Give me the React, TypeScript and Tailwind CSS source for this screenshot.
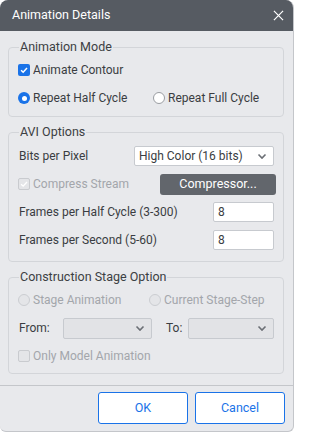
import React from 'react';

const ChevronDown = ({ className = '' }: { className?: string }) => (
  <svg viewBox="0 0 12 12" className={className} fill="none" stroke="currentColor" strokeWidth="1.6">
    <path d="M2.5 4.5 6 8l3.5-3.5" />
  </svg>
);

const CheckBox = ({ checked, disabled }: { checked?: boolean; disabled?: boolean }) => {
  if (checked && !disabled) {
    return (
      <span className="flex h-[12px] w-[12px] items-center justify-center rounded-[2px] bg-[#1a73e8]">
        <svg viewBox="0 0 12 12" className="h-[10px] w-[10px]" fill="none" stroke="white" strokeWidth="1.8">
          <path d="M2.5 6.2 5 8.6 9.6 3.6" />
        </svg>
      </span>
    );
  }
  return (
    <span className="flex h-[12px] w-[12px] items-center justify-center rounded-[2px] border border-[#c9cbcf] bg-[#e4e5e8]">
      {checked && (
        <svg viewBox="0 0 12 12" className="h-[10px] w-[10px]" fill="none" stroke="white" strokeWidth="1.6">
          <path d="M2.5 6.2 5 8.6 9.6 3.6" />
        </svg>
      )}
    </span>
  );
};

const Radio = ({ checked, disabled }: { checked?: boolean; disabled?: boolean }) => {
  if (checked) {
    return (
      <span className="flex h-[12px] w-[12px] items-center justify-center rounded-full bg-[#1a73e8]">
        <span className="h-[5px] w-[5px] rounded-full bg-white" />
      </span>
    );
  }
  return (
    <span
      className={
        disabled
          ? 'h-[12px] w-[12px] rounded-full border border-[#cbcdd1] bg-[#e4e5e8]'
          : 'h-[12px] w-[12px] rounded-full border border-[#9a9da2] bg-white'
      }
    />
  );
};

const Group = ({ title, className = '', children }: { title: string; className?: string; children: React.ReactNode }) => (
  <fieldset className={`rounded-[4px] border border-[#d3d5d9] px-[9px] ${className}`}>
    <legend className="ml-[1px] px-[1px] text-[12.5px] leading-[16px] text-[#3c4043]">{title}</legend>
    {children}
  </fieldset>
);

export default function App() {
  return (
    <div
      className="flex h-[432px] w-[294px] flex-col overflow-hidden rounded-t-[8px] rounded-b-[6px] border-r border-b border-[#c4c6ca] bg-[#e8e9ec] text-[12px] text-[#3a3d42]"
      style={{ fontFamily: 'Roboto, "Noto Sans", sans-serif' }}
    >
      {/* Title bar */}
      <div className="flex h-[31px] shrink-0 items-center justify-between bg-[#565b62] pl-[12px] pr-[9px]">
        <span className="text-[12.5px] text-white">Animation Details</span>
        <svg viewBox="0 0 12 12" className="h-[11px] w-[11px]" fill="none" stroke="white" strokeWidth="1.3">
          <path d="M1 1l10 10M11 1 1 11" />
        </svg>
      </div>

      <div className="flex flex-col gap-[7px] px-[8px] pt-[8px] pr-[9px]">
        {/* Animation Mode */}
        <Group title="Animation Mode" className="pt-px pb-[4px]">
          <div className="flex h-[28px] items-center gap-[3px]">
            <CheckBox checked />
            <span>Animate Contour</span>
          </div>
          <div className="flex h-[28px] items-center">
            <div className="flex w-[135px] items-center gap-[3px]">
              <Radio checked />
              <span>Repeat Half Cycle</span>
            </div>
            <div className="flex items-center gap-[3px]">
              <Radio />
              <span>Repeat Full Cycle</span>
            </div>
          </div>
        </Group>

        {/* AVI Options */}
        <Group title="AVI Options" className="pt-[2px] pb-[7px]">
          <div className="flex h-[28px] items-center justify-between">
            <span className="pl-px">Bits per Pixel</span>
            <div className="flex h-[20px] w-[140px] items-center justify-between rounded-[2px] border border-[#c7cacf] bg-white pr-[5px] pl-[4px]">
              <span>High Color (16 bits)</span>
              <ChevronDown className="h-[12px] w-[12px] text-[#6b6f75]" />
            </div>
          </div>
          <div className="flex h-[28px] items-center justify-between">
            <div className="flex items-center gap-[3px] text-[#a3a6ab]">
              <CheckBox checked disabled />
              <span>Compress Stream</span>
            </div>
            <button className="-mr-[2px] h-[21px] w-[116px] rounded-[3px] bg-[#62666c] text-[12.5px] text-white">
              Compressor...
            </button>
          </div>
          <div className="flex h-[28px] items-center justify-between">
            <span className="pl-px">Frames per Half Cycle (3-300)</span>
            <div className="flex h-[20px] w-[61px] items-center rounded-[2px] border border-[#c7cacf] bg-white pl-[4px]">
              8
            </div>
          </div>
          <div className="flex h-[28px] items-center justify-between">
            <span className="pl-px">Frames per Second (5-60)</span>
            <div className="flex h-[20px] w-[61px] items-center rounded-[2px] border border-[#c7cacf] bg-white pl-[4px]">
              8
            </div>
          </div>
        </Group>

        {/* Construction Stage Option */}
        <Group title="Construction Stage Option" className="pt-px pb-[3px]">
          <div className="flex h-[28px] items-center text-[#a3a6ab]">
            <div className="flex w-[131px] items-center gap-[3px]">
              <Radio disabled />
              <span>Stage Animation</span>
            </div>
            <div className="flex items-center gap-[3px] whitespace-nowrap">
              <Radio disabled />
              <span>Current Stage-Step</span>
            </div>
          </div>
          <div className="flex h-[28px] items-center">
            <span className="w-[45px] pl-px">From:</span>
            <div className="flex h-[21px] w-[89px] items-center justify-end rounded-[2px] border border-[#c7cacf] bg-[#e2e3e6] pr-[5px]">
              <ChevronDown className="h-[12px] w-[12px] text-[#6b6f75]" />
            </div>
            <span className="w-[36px] pl-[14px]">To:</span>
            <div className="ml-auto flex h-[21px] w-[86px] items-center justify-end rounded-[2px] border border-[#c7cacf] bg-[#e2e3e6] pr-[5px]">
              <ChevronDown className="h-[12px] w-[12px] text-[#6b6f75]" />
            </div>
          </div>
          <div className="flex h-[28px] items-center gap-[3px] text-[#a3a6ab]">
            <CheckBox disabled />
            <span>Only Model Animation</span>
          </div>
        </Group>
      </div>

      {/* Footer */}
      <div className="mt-[11px] border-t border-[#c4c6ca] pt-[6px] pr-[8px]">
        <div className="flex justify-end gap-[7px]">
          <button className="h-[32px] w-[90px] rounded-[3px] border border-[#1a73e8] bg-white text-[12.5px] text-[#1a73e8]">
            OK
          </button>
          <button className="h-[32px] w-[90px] rounded-[3px] border border-[#1a73e8] bg-white text-[12.5px] text-[#1a73e8]">
            Cancel
          </button>
        </div>
      </div>
    </div>
  );
}
